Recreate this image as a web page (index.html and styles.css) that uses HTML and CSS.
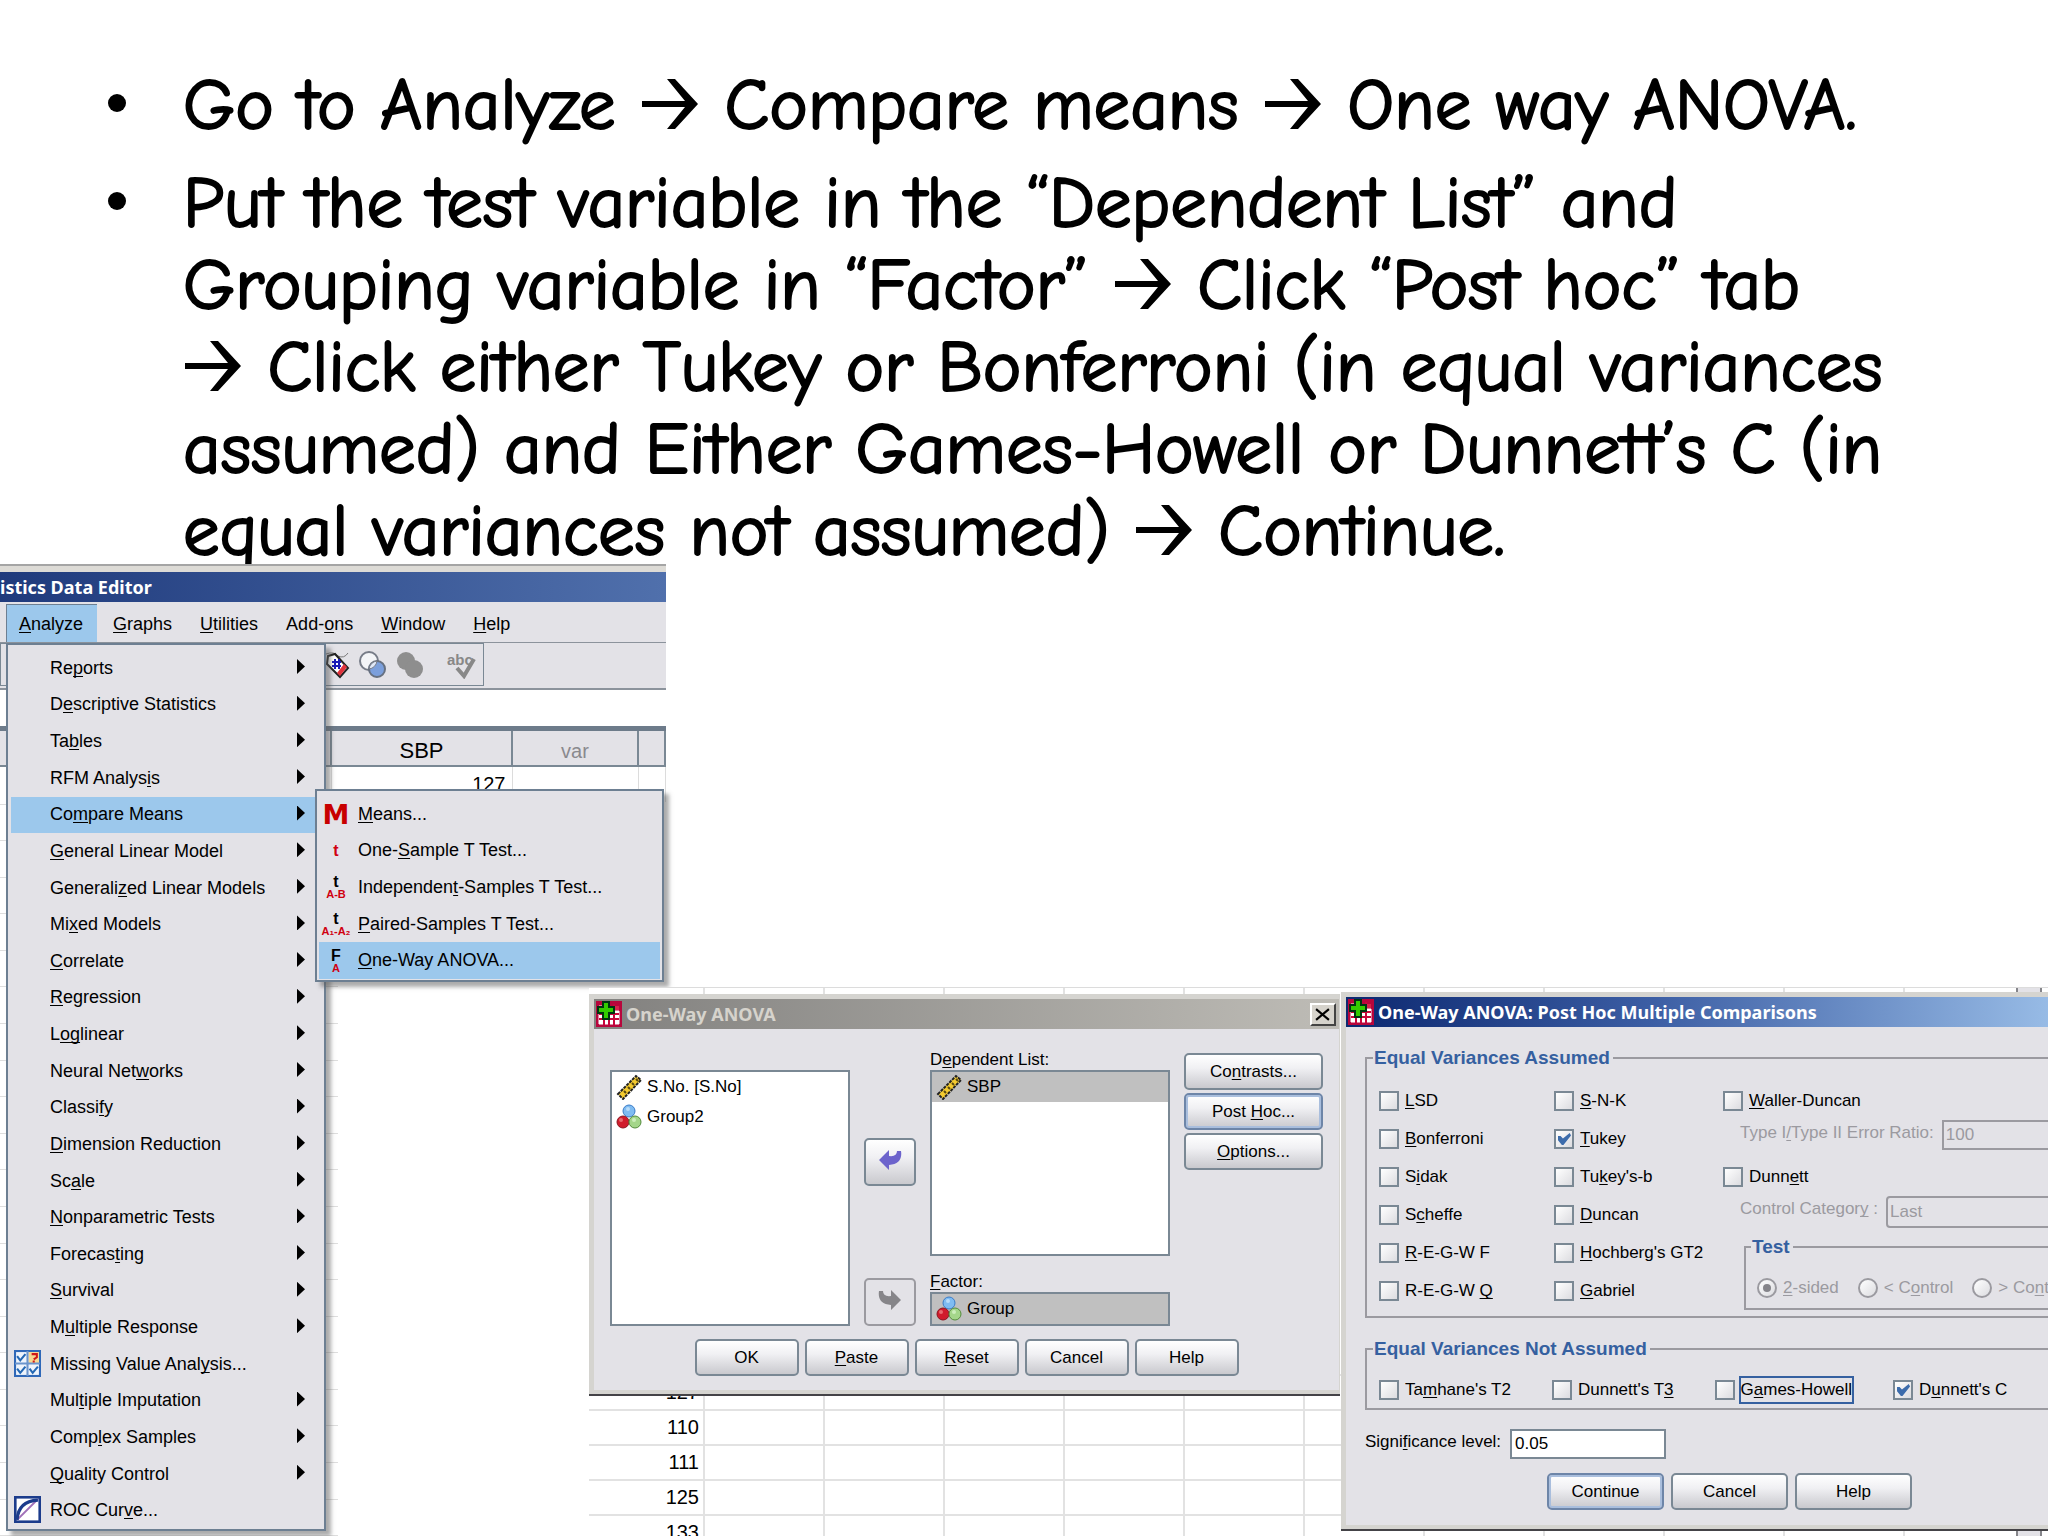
FILE: index.html
```html
<!DOCTYPE html>
<html lang="en">

<head>
  <meta charset="utf-8">
  <title>One way ANOVA</title>
  <link rel="stylesheet" href="styles.css">
</head>

<body>
  <!-- shared icons -->
  <svg class="sprites" xmlns="http://www.w3.org/2000/svg">
    <defs>
      <symbol id="arrow" viewBox="0 0 60 52">
        <path d="M2 23H45L27 1H35L58 26L35 51H27L45 29H2Z" />
      </symbol>
      <symbol id="app" viewBox="0 0 26 26">
        <rect width="26" height="26" fill="#b8063c" />
        <path d="M3 5h4M3 10h20v13H3z" fill="#fff" stroke="#fff" />
        <path d="M3 13h20M3 18h20M8 9v15M13 9v15M18 3v21" stroke="#c8063c" stroke-width="2" />
        <path d="M18 5h5v4h-5z" fill="#d8244c" />
        <path d="M7 1h6v5h5v6h-5v6H7v-6H2V6h5z" fill="#3c0" stroke="#031" stroke-width="2" />
      </symbol>
      <symbol id="ruler" viewBox="0 0 26 26">
        <path d="M2 20L20 2L25 6L7 25Z" fill="#f4cb30" stroke="#222" stroke-width="2" stroke-dasharray="3 1" />
        <path d="M8 17l2 2M12 13l2 2M16 9l2 2M20 5l2 2" stroke="#5a4a10" stroke-width="2" />
      </symbol>
      <symbol id="balls" viewBox="0 0 26 26">
        <circle cx="13" cy="7" r="6" fill="#7fbcf2" stroke="#3a7cc8" />
        <circle cx="7" cy="18" r="6" fill="#d01c2c" stroke="#8c1420" />
        <circle cx="19" cy="18" r="6" fill="#a4d68a" stroke="#548c3c" />
        <circle cx="5" cy="16" r="2" fill="#e86a70" />
        <circle cx="12" cy="5" r="2" fill="#b8dcfa" />
        <circle cx="18" cy="16" r="2" fill="#cdeebc" />
      </symbol>
      <symbol id="move" viewBox="0 0 24 22">
        <path d="M1 11L11 1V7Q19 8 19 2H23Q25 15 11 16V21Z" />
      </symbol>
    </defs>
  </svg>

  <main class="slide">
    <ul class="steps">
      <li>Go to Analyze <svg class="arrow" role="img" aria-label="→"><use href="#arrow" /></svg> Compare means <svg class="arrow" role="img" aria-label="→"><use href="#arrow" /></svg> One way ANOVA.</li>
      <li>Put the test variable in the “Dependent List” and<br>
        Grouping variable in “Factor” <svg class="arrow" role="img" aria-label="→"><use href="#arrow" /></svg> Click “Post hoc” tab<br>
        <svg class="arrow" role="img" aria-label="→"><use href="#arrow" /></svg> Click either Tukey or Bonferroni (in equal variances<br>
        assumed) and Either Games-Howell or Dunnett’s C (in<br>
        equal variances not assumed) <svg class="arrow" role="img" aria-label="→"><use href="#arrow" /></svg> Continue.</li>
    </ul>

    <!-- data editor -->
    <section class="editor">
      <div class="editor-title">istics Data Editor</div>
      <nav class="menubar">
        <button class="open"><u>A</u>nalyze</button>
        <button><u>G</u>raphs</button>
        <button><u>U</u>tilities</button>
        <button>Add-<u>o</u>ns</button>
        <button><u>W</u>indow</button>
        <button><u>H</u>elp</button>
      </nav>
      <div class="toolbar">
        <div class="tools">
          <svg width="24" height="28" viewBox="0 0 24 28">
            <path d="M0 3Q8 0 12 5Q18 8 22 2" fill="none" stroke="#777" />
            <path d="M2 5L9 3L22 17L14 26L1 13Z" fill="#fff" stroke="#222" stroke-width="2" />
            <path d="M21 16L14 25L11 22L18 13Z" fill="#e0323c" />
            <path d="M6 11h9M6 15h9M9 8v10M13 8v10" stroke="#1a1ab8" stroke-width="2" />
          </svg>
          <svg width="28" height="28" viewBox="0 0 28 28">
            <circle cx="10" cy="10" r="9" fill="#f4f5f8" stroke="#777c88" stroke-width="2" />
            <circle cx="18" cy="18" r="8" fill="#7b9fdc" stroke="#667080" stroke-width="2" />
            <path d="M10 18A9 9 0 0 1 18 10A9 9 0 0 1 10 18" fill="#dfe8f8" stroke="#777c88" />
          </svg>
          <svg width="28" height="28" viewBox="0 0 28 28">
            <circle cx="10" cy="10" r="9" fill="#8e8e8e" />
            <circle cx="18" cy="18" r="9" fill="#8e8e8e" />
          </svg>
          <svg class="spell" width="30" height="28" viewBox="0 0 30 28">
            <text x="0" y="14">abc</text>
            <path d="M10 17L17 25L27 8" fill="none" stroke="#888" stroke-width="4" />
          </svg>
        </div>
      </div>
      <div class="cell-bar"></div>
      <table class="columns">
        <tr><th class="hidden-col"></th><th class="sbp">SBP</th><th class="var">var</th><th></th></tr>
        <tr><td></td><td>127</td><td></td><td></td></tr>
      </table>
    </section>

    <div class="ruled">
      <i></i><i></i><i></i><i></i><i></i><i></i><i></i><i></i><i></i><i></i><i></i>
      <i></i><i></i><i></i><i></i><i></i><i></i><i></i><i></i><i></i><i></i>
    </div>

    <div class="menu analyze-menu">
      <button class="more"><span>Re<u>p</u>orts</span></button>
      <button class="more"><span>D<u>e</u>scriptive Statistics</span></button>
      <button class="more"><span>Ta<u>b</u>les</span></button>
      <button class="more"><span>RFM Analys<u>i</u>s</span></button>
      <button class="more active"><span>Co<u>m</u>pare Means</span></button>
      <button class="more"><span><u>G</u>eneral Linear Model</span></button>
      <button class="more"><span>Generali<u>z</u>ed Linear Models</span></button>
      <button class="more"><span>Mi<u>x</u>ed Models</span></button>
      <button class="more"><span><u>C</u>orrelate</span></button>
      <button class="more"><span><u>R</u>egression</span></button>
      <button class="more"><span>L<u>og</u>linear</span></button>
      <button class="more"><span>Neural Net<u>w</u>orks</span></button>
      <button class="more"><span>Classi<u>f</u>y</span></button>
      <button class="more"><span><u>D</u>imension Reduction</span></button>
      <button class="more"><span>Sc<u>a</u>le</span></button>
      <button class="more"><span><u>N</u>onparametric Tests</span></button>
      <button class="more"><span>Forecas<u>t</u>ing</span></button>
      <button class="more"><span><u>S</u>urvival</span></button>
      <button class="more"><span>M<u>u</u>ltiple Response</span></button>
      <button>
        <svg class="menu-icon" viewBox="0 0 26 26">
          <rect x="1" y="1" width="24" height="24" fill="#eef4fc" stroke="#2f68b8" stroke-width="2" />
          <path d="M14 2h10v11H14z" fill="#f8d890" />
          <path d="M13 1v24M1 13h24" stroke="#6a94cc" stroke-width="2" />
          <path d="M3 6l3 4l5-6M3 18l3 4l5-6M15 18l3 4l5-6" fill="none" stroke="#2468b4" stroke-width="2" />
          <path d="M17 4h5v3l-3 2M18 11h2" fill="none" stroke="#d01818" stroke-width="2" />
        </svg>
        <span>Missing Value Anal<u>y</u>sis...</span>
      </button>
      <button class="more"><span>Mul<u>t</u>iple Imputation</span></button>
      <button class="more"><span>Comp<u>l</u>ex Samples</span></button>
      <button class="more"><span><u>Q</u>uality Control</span></button>
      <button>
        <svg class="menu-icon" viewBox="0 0 26 26">
          <rect x="1" y="1" width="24" height="24" fill="#fff" stroke="#1c3c8c" stroke-width="3" />
          <path d="M3 23L23 3" stroke="#a070b8" stroke-width="2" />
          <path d="M3 23Q4 5 23 4" fill="none" stroke="#1c3c8c" stroke-width="3" />
        </svg>
        <span>ROC Cur<u>v</u>e...</span>
      </button>
    </div>

    <div class="menu means-menu">
      <button><b class="stat-icon big">M</b><span><u>M</u>eans...</span></button>
      <button><b class="stat-icon red">t</b><span>One-<u>S</u>ample T Test...</span></button>
      <button><b class="stat-icon">t<small>A-B</small></b><span>Independen<u>t</u>-Samples T Test...</span></button>
      <button><b class="stat-icon">t<small>A₁-A₂</small></b><span><u>P</u>aired-Samples T Test...</span></button>
      <button class="active"><b class="stat-icon">F<small>A</small></b><span><u>O</u>ne-Way ANOVA...</span></button>
    </div>

    <!-- sheet behind the dialogs -->
    <div class="sheet">
      <table>
        <tr class="covered"><td></td><td></td><td></td><td></td><td></td><td></td><td></td><td></td><td></td><td></td><td></td><td></td><td></td></tr>
        <tr><td>127</td><td></td><td></td><td></td><td></td><td></td><td></td><td></td><td></td><td></td><td></td><td></td><td></td></tr>
        <tr><td>110</td><td></td><td></td><td></td><td></td><td></td><td></td><td></td><td></td><td></td><td></td><td></td><td></td></tr>
        <tr><td>111</td><td></td><td></td><td></td><td></td><td></td><td></td><td></td><td></td><td></td><td></td><td></td><td></td></tr>
        <tr><td>125</td><td></td><td></td><td></td><td></td><td></td><td></td><td></td><td></td><td></td><td></td><td></td><td></td></tr>
        <tr><td>133</td><td></td><td></td><td></td><td></td><td></td><td></td><td></td><td></td><td></td><td></td><td></td><td></td></tr>
      </table>
      <div class="scrollbar"></div>
    </div>

    <section class="dialog anova">
      <header class="dialog-title">
        <svg><use href="#app" /></svg>
        <span>One-Way ANOVA</span>
        <button class="close" aria-label="Close"><svg viewBox="0 0 14 14"><path d="M1 2L13 12M13 2L1 12" stroke="#000" stroke-width="2" /></svg></button>
      </header>
      <div class="anova-body">
        <ul class="listbox source">
          <li><svg><use href="#ruler" /></svg>S.No. [S.No]</li>
          <li><svg><use href="#balls" /></svg>Group2</li>
        </ul>
        <div class="movers">
          <button class="btn" aria-label="Move left"><svg fill="#6c63cc"><use href="#move" /></svg></button>
          <button class="btn" disabled aria-label="Move right"><svg class="flip" fill="#868589"><use href="#move" /></svg></button>
        </div>
        <div class="targets">
          <div class="caption">D<u>e</u>pendent List:</div>
          <ul class="listbox dependent">
            <li class="picked"><svg><use href="#ruler" /></svg>SBP</li>
          </ul>
          <div class="caption"><u>F</u>actor:</div>
          <ul class="listbox">
            <li class="picked"><svg><use href="#balls" /></svg>Group</li>
          </ul>
        </div>
        <div class="actions">
          <button class="btn">Co<u>n</u>trasts...</button>
          <button class="btn focused">Post <u>H</u>oc...</button>
          <button class="btn"><u>O</u>ptions...</button>
        </div>
      </div>
      <footer class="dialog-buttons">
        <button class="btn">OK</button>
        <button class="btn"><u>P</u>aste</button>
        <button class="btn"><u>R</u>eset</button>
        <button class="btn">Cancel</button>
        <button class="btn">Help</button>
      </footer>
    </section>

    <section class="dialog posthoc">
      <header class="dialog-title">
        <svg><use href="#app" /></svg>
        <span>One-Way ANOVA: Post Hoc Multiple Comparisons</span>
      </header>
      <div class="posthoc-body">
        <fieldset>
          <legend>Equal Variances Assumed</legend>
          <div class="assumed">
            <div>
              <label class="check"><input type="checkbox"><span><u>L</u>SD</span></label>
              <label class="check"><input type="checkbox"><span><u>B</u>onferroni</span></label>
              <label class="check"><input type="checkbox"><span>S<u>i</u>dak</span></label>
              <label class="check"><input type="checkbox"><span>S<u>c</u>heffe</span></label>
              <label class="check"><input type="checkbox"><span><u>R</u>-E-G-W F</span></label>
              <label class="check"><input type="checkbox"><span>R-E-G-W <u>Q</u></span></label>
            </div>
            <div>
              <label class="check"><input type="checkbox"><span><u>S</u>-N-K</span></label>
              <label class="check"><input type="checkbox" checked><span><u>T</u>ukey</span></label>
              <label class="check"><input type="checkbox"><span>Tu<u>k</u>ey's-b</span></label>
              <label class="check"><input type="checkbox"><span><u>D</u>uncan</span></label>
              <label class="check"><input type="checkbox"><span><u>H</u>ochberg's GT2</span></label>
              <label class="check"><input type="checkbox"><span><u>G</u>abriel</span></label>
            </div>
            <div>
              <label class="check"><input type="checkbox"><span><u>W</u>aller-Duncan</span></label>
              <div class="option">
                <label for="ratio">Type I<u>/</u>Type II Error Ratio:</label>
                <input type="text" id="ratio" value="100" disabled>
              </div>
              <label class="check"><input type="checkbox"><span>Dunn<u>e</u>tt</span></label>
              <div class="option tall">
                <label for="category">Control Categor<u>y</u> :</label>
                <select id="category" disabled><option>Last</option></select>
              </div>
              <fieldset class="test">
                <legend>Test</legend>
                <div class="radios">
                  <label><input type="radio" name="test" checked disabled><span><u>2</u>-sided</span></label>
                  <label><input type="radio" name="test" disabled><span>&lt; C<u>o</u>ntrol</span></label>
                  <label><input type="radio" name="test" disabled><span>&gt; Co<u>n</u>trol</span></label>
                </div>
              </fieldset>
            </div>
          </div>
        </fieldset>
        <fieldset class="unequal">
          <legend>Equal Variances Not Assumed</legend>
          <div class="not-assumed">
            <label class="check"><input type="checkbox"><span>Ta<u>m</u>hane's T2</span></label>
            <label class="check"><input type="checkbox"><span>Dunnett's T<u>3</u></span></label>
            <label class="check ringed"><input type="checkbox"><span>G<u>a</u>mes-Howell</span></label>
            <label class="check"><input type="checkbox" checked><span>D<u>u</u>nnett's C</span></label>
          </div>
        </fieldset>
        <div class="level">
          <label for="level">Signi<u>f</u>icance level:</label>
          <input type="text" id="level" value="0.05">
        </div>
      </div>
      <footer class="dialog-buttons">
        <button class="btn focused">Continue</button>
        <button class="btn">Cancel</button>
        <button class="btn">Help</button>
      </footer>
    </section>
  </main>
</body>

</html>
```
FILE: styles.css
```css
* {
  box-sizing: border-box;
}

body {
  margin: 0;
  overflow: hidden;
  background: #fff;
  color: #000;
  font-family: "Liberation Sans", Arial, sans-serif;
  font-size: 17px;
}

button,
input,
select {
  font: inherit;
  color: inherit;
}

ul {
  margin: 0;
  padding: 0;
  list-style: none;
}

u {
  text-underline-offset: 2px;
  text-decoration-skip-ink: none;
}

.sprites {
  display: none;
}

.slide {
  position: relative;
  min-height: 100vh;
  overflow: hidden;
}

/* bullet text */
.steps {
  padding: 64px 0 0 183px;
  font-family: "Comic Sans MS", "Comic Neue", "Open Sans", sans-serif;
  font-size: 73px;
  font-variant-ligatures: none;
  line-height: 82px;
  white-space: nowrap;
  -webkit-text-stroke: 2px #000;
}

.steps li {
  position: relative;
  margin-bottom: 16px;
}

.steps li::before {
  content: "";
  position: absolute;
  left: -75px;
  top: 30px;
  width: 18px;
  height: 18px;
  border-radius: 50%;
  background: #000;
}

.arrow {
  width: 60px;
  height: 52px;
  vertical-align: -1px;
}

/* data editor */
.editor {
  position: absolute;
  left: 0;
  top: 564px;
  width: 666px;
  height: 422px;
  overflow: hidden;
  background: #fff;
  border-top: 2px solid #a5a5a5;
}

.editor-title {
  height: 36px;
  border-top: 6px solid #dddbd6;
  background: linear-gradient(to right, #1f3a7c, #5070ac);
  color: #fff;
  font-family: "Noto Sans", sans-serif;
  font-size: 18px;
  font-weight: bold;
  line-height: 30px;
}

.menubar {
  display: flex;
  height: 41px;
  padding: 2px 0 0 6px;
  background: #e3e2e7;
  border-bottom: 1px solid #8c939c;
  font-size: 18px;
}

.menubar button {
  padding: 3px 14px 0;
  border: 0;
  background: none;
}

.menubar .open {
  margin-right: 2px;
  padding: 2px 14px 0 12px;
  background: #9cc8ec;
  border-left: 1px solid #6d7f92;
  border-top: 1px solid #6d7f92;
}

.toolbar {
  height: 47px;
  background: #e3e2e7;
  border-bottom: 2px solid #8c939c;
}

.tools {
  display: flex;
  align-items: center;
  gap: 9px;
  width: 484px;
  height: 43px;
  padding-left: 325px;
  border: 1px solid #7a8894;
}

.spell {
  margin-left: 14px;
}

.spell text {
  font-size: 15px;
  font-weight: bold;
  fill: #888;
}

.cell-bar {
  height: 36px;
}

.columns {
  width: 100%;
  table-layout: fixed;
  border-collapse: collapse;
  border-top: 5px solid #6d7b8a;
  font-size: 20px;
}

.columns th {
  height: 37px;
  padding: 7px 0 0;
  background: #e3e2e7;
  border-right: 2px solid #7a8894;
  border-bottom: 2px solid #7a8894;
  font-weight: normal;
}

.columns td {
  height: 36px;
  padding: 0 6px;
  border-right: 1px solid #dcdcdc;
  text-align: right;
}

.hidden-col {
  width: 331px;
}

.columns .sbp {
  width: 181px;
  font-size: 22px;
}

.columns .var {
  width: 126px;
  color: #8a898e;
}

/* rest of the sheet, showing at both sides of the menu */
.ruled {
  position: absolute;
  left: 0;
  top: 768px;
  bottom: 0;
  width: 338px;
  display: flex;
  flex-direction: column;
}

.ruled i {
  flex: 1;
  border-bottom: 1px solid #dedede;
}

/* menus */
.menu {
  position: absolute;
  display: flex;
  flex-direction: column;
  background: #e3e2e7;
  border: 2px solid #6d7f92;
  box-shadow: 5px 5px 4px rgba(90, 90, 90, .5);
  font-size: 18px;
}

.analyze-menu {
  left: 6px;
  top: 643px;
  bottom: 5px;
  width: 320px;
  padding: 5px 3px 0;
}

.menu button {
  position: relative;
  flex: 1;
  display: flex;
  align-items: center;
  padding: 0 0 0 39px;
  border: 0;
  background: none;
  text-align: left;
}

.menu .active {
  background: #9cc8ec;
}

.more::after {
  content: "";
  position: absolute;
  right: 16px;
  top: 9px;
  width: 8px;
  height: 15px;
  background: #000;
  clip-path: polygon(0 0, 100% 50%, 0 100%);
}

.menu-icon {
  position: absolute;
  left: 3px;
  top: 4px;
  width: 27px;
  height: 27px;
}

.means-menu {
  left: 315px;
  top: 789px;
  width: 349px;
  height: 193px;
  padding: 5px 2px 1px;
}

.stat-icon {
  position: absolute;
  left: 0;
  width: 34px;
  font-size: 16px;
  line-height: 15px;
  text-align: center;
}

.stat-icon.big {
  color: #c80000;
  font-family: "DejaVu Sans", sans-serif;
  font-size: 27px;
}

.stat-icon.red,
.stat-icon small {
  color: #d00010;
}

.stat-icon small {
  display: block;
  font-size: 11px;
  line-height: 11px;
}

/* sheet */
.sheet {
  position: absolute;
  left: 589px;
  top: 987px;
  right: 0;
  bottom: 0;
  overflow: hidden;
  background: #fff;
  border-top: 1px solid #dcdcdc;
}

.sheet table {
  width: 1555px;
  table-layout: fixed;
  border-collapse: collapse;
  font-size: 20px;
}

.sheet td {
  width: 120px;
  height: 35px;
  padding: 0 4px;
  border-right: 2px solid #e2e2e2;
  border-bottom: 2px solid #e2e2e2;
  text-align: right;
}

.sheet td:first-child {
  width: 115px;
}

.sheet .covered td {
  height: 387px;
}

.scrollbar {
  position: absolute;
  top: 0;
  bottom: 0;
  right: 6px;
  width: 26px;
  background: #e3e2e7;
  border: 2px solid #85858a;
  border-width: 0 2px;
}

/* dialogs */
.dialog {
  position: absolute;
  background: #e3e2e7;
  border: solid #d5d4d0;
  border-width: 5px 1px 4px 5px;
  box-shadow: 0 2px 0 #444347;
}

.anova {
  left: 589px;
  top: 994px;
  width: 751px;
}

.posthoc {
  left: 1341px;
  top: 992px;
  width: 773px;
}

.dialog-title {
  display: flex;
  align-items: center;
  height: 30px;
  padding: 0 3px 0 2px;
  gap: 4px;
  background: linear-gradient(to right, #82817f, #bebcb6);
  color: #d6d3cc;
  font-family: "Noto Sans", sans-serif;
  font-size: 18px;
  font-weight: bold;
}

.dialog-title > svg {
  width: 26px;
  height: 26px;
}

.posthoc .dialog-title {
  background: linear-gradient(to right, #0c2870, #3c5ea4 40%, #a6caf0);
  color: #fff;
}

.close {
  display: flex;
  width: 26px;
  height: 23px;
  margin-left: auto;
  padding: 2px 3px;
  background: #d6d3cc;
  border: 2px solid;
  border-color: #fff #444 #444 #fff;
}

.btn {
  height: 37px;
  padding: 0;
  background: linear-gradient(to bottom, #fff, #f0f0f3 40%, #c9c9ce);
  border: 2px solid #7a8894;
  border-radius: 5px;
}

.btn.focused {
  border-color: #6d85a8;
  box-shadow: inset 0 0 0 2px #a9bedd;
}

.btn:disabled {
  background: #e3e2e7;
  border-color: #9b9aa0;
}

.anova-body {
  display: grid;
  grid-template-columns: 240px 52px 240px 139px;
  column-gap: 14px;
  padding: 20px 0 0 16px;
}

.listbox {
  background: #fff;
  border: 2px solid #7a8894;
}

.listbox li {
  display: flex;
  align-items: center;
  gap: 5px;
  height: 30px;
  padding-left: 4px;
}

.listbox svg {
  width: 26px;
  height: 26px;
}

.picked {
  background: #c0c0c0;
}

.source {
  margin-top: 21px;
}

.movers {
  display: flex;
  flex-direction: column;
  justify-content: space-between;
  padding-top: 89px;
}

.movers .btn {
  height: 48px;
}

.movers svg {
  width: 24px;
  height: 22px;
}

.flip {
  transform: scaleX(-1);
}

.caption {
  height: 21px;
  line-height: 21px;
}

.dependent {
  height: 186px;
  margin-bottom: 15px;
}

.actions {
  display: flex;
  flex-direction: column;
  gap: 3px;
  padding-top: 4px;
}

.dialog-buttons {
  display: flex;
  justify-content: center;
  gap: 6px;
  padding: 13px 0 14px;
}

.dialog-buttons .btn {
  width: 104px;
}

.posthoc .dialog-buttons {
  gap: 7px;
  padding: 14px 0 15px;
}

.posthoc .dialog-buttons .btn {
  width: 117px;
}

/* post hoc form */
.posthoc-body {
  padding: 19px 20px 0 19px;
}

fieldset {
  margin: 0;
  padding: 12px 0 6px 12px;
  border: 2px solid #9b9aa0;
}

legend {
  margin-left: -6px;
  padding: 0 3px 0 1px;
  color: #3560a0;
  font-size: 19px;
  font-weight: bold;
  line-height: 24px;
}

.assumed {
  display: grid;
  grid-template-columns: 175px 169px 1fr;
}

.check {
  display: flex;
  align-items: center;
  gap: 6px;
  height: 38px;
}

.check input,
.radios input {
  appearance: none;
  position: relative;
  width: 20px;
  height: 20px;
  margin: 0;
  background: linear-gradient(135deg, #fff, #dcdce0);
  border: 2px solid #7a8894;
}

.check input:checked::after {
  content: "";
  position: absolute;
  left: 2px;
  top: 2px;
  width: 13px;
  height: 12px;
  background: #3c6cac;
  clip-path: polygon(0 25%, 20% 25%, 38% 45%, 90% 0, 100% 20%, 42% 100%, 30% 100%, 0 60%);
}

.option {
  display: flex;
  gap: 8px;
  height: 38px;
  padding-left: 17px;
  color: #9b9aa0;
  line-height: 26px;
  white-space: nowrap;
}

.option.tall {
  height: 40px;
}

.option input,
.option select {
  flex: 1;
  min-width: 0;
  height: 30px;
  padding: 0 2px;
  background: none;
  border: 2px solid #9b9aa0;
  color: #9b9aa0;
  opacity: 1;
}

.option select {
  appearance: none;
  height: 32px;
  border-radius: 4px;
}

.test {
  margin-left: 21px;
  padding: 20px 0 10px 11px;
  white-space: nowrap;
}

.test legend {
  line-height: 22px;
}

.radios {
  display: flex;
  gap: 19px;
  color: #9b9aa0;
}

.radios label {
  display: flex;
  align-items: center;
  gap: 6px;
}

.radios input {
  border-color: #9b9aa0;
  border-radius: 50%;
}

.radios input:checked::after {
  content: "";
  position: absolute;
  inset: 4px;
  border-radius: 50%;
  background: #85848a;
}

.unequal {
  margin-top: 19px;
  padding: 16px 0 5px 12px;
}

.not-assumed {
  display: flex;
  gap: 41px;
}

.not-assumed .check {
  height: 26px;
}

.ringed span {
  outline: 2px solid #3560a0;
  line-height: 24px;
}

.level {
  display: flex;
  gap: 9px;
  margin-top: 19px;
  line-height: 26px;
}

.level input {
  width: 156px;
  height: 30px;
  padding: 0 3px;
  background: #fff;
  border: 2px solid #7a8894;
}
```
